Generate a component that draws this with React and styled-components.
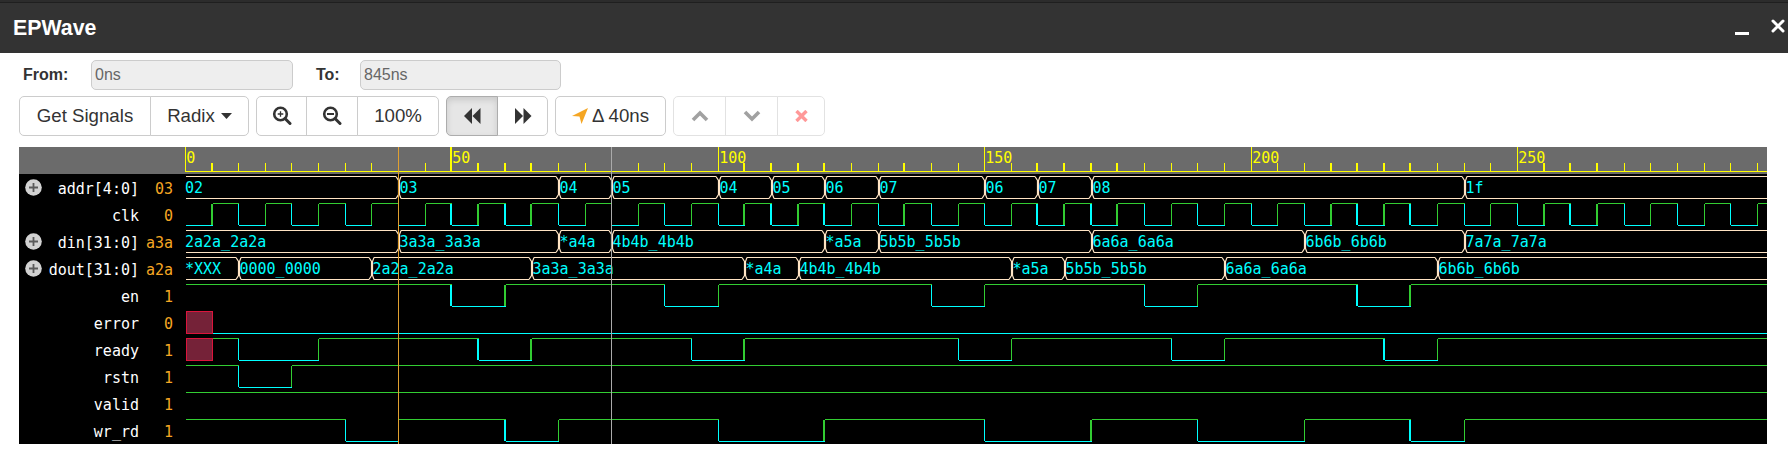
import React from "react";
import styled, { createGlobalStyle } from "styled-components";

const GlobalStyle = createGlobalStyle`
  html, body { margin: 0; padding: 0; background: #fff; overflow: hidden; }
  body { font-family: "Liberation Sans", Arial, sans-serif; color: #333; }
`;

const Page = styled.div`
  width: 1788px;
  height: 451px;
  display: flex;
  flex-direction: column;
`;
const TopStrip = styled.div`
  height: 2px;
  background: #2c2c2c;
  border-bottom: 1px solid #1f1f1f;
`;
const TitleBar = styled.header`
  height: 50px;
  background: #333;
  display: flex;
  align-items: center;
  padding-left: 13px;
`;
const Title = styled.h1`
  margin: 0;
  flex: 1;
  font-size: 21.33px;
  font-weight: 700;
  color: #fff;
`;
const WindowIcon = styled.svg`
  display: block;
  flex: none;
`;
const FormRow = styled.div`
  display: flex;
  align-items: center;
  height: 30px;
  margin-top: 7px;
  padding-left: 23px;
`;
const FieldLabel = styled.label`
  width: ${(p) => p.$w}px;
  margin-left: ${(p) => p.$ml || 0}px;
  font-size: 16px;
  font-weight: 700;
  color: #333;
`;
const TimeInput = styled.input`
  box-sizing: border-box;
  width: ${(p) => p.$w}px;
  height: 30px;
  padding: 0 3px;
  background: #eee;
  border: 1px solid #ccc;
  border-radius: 5px;
  font: 16px "Liberation Sans", Arial, sans-serif;
  color: #666;
  outline: none;
`;
const Toolbar = styled.div`
  display: flex;
  height: 40px;
  margin-top: 6px;
  padding-left: 19px;
  gap: 7px;
`;
const Group = styled.div`
  display: flex;
  opacity: ${(p) => (p.$disabled ? 0.55 : 1)};
`;
const Btn = styled.button`
  box-sizing: border-box;
  width: ${(p) => p.$w}px;
  height: 40px;
  margin: 0 0 0 -1px;
  padding: 0;
  display: flex;
  align-items: center;
  justify-content: center;
  gap: ${(p) => p.$gap || 0}px;
  font: 18.67px "Liberation Sans", Arial, sans-serif;
  color: #333;
  background: ${(p) => (p.$active ? "#e6e6e6" : "#fff")};
  border: 1px solid ${(p) => (p.$active ? "#adadad" : "#ccc")};
  box-shadow: ${(p) => (p.$active ? "inset 0 3px 6px rgba(0,0,0,.125)" : "none")};
  position: ${(p) => (p.$active ? "relative" : "static")};
  z-index: ${(p) => (p.$active ? 1 : 0)};
  &:first-child { margin-left: 0; border-radius: 5px 0 0 5px; }
  &:last-child { border-radius: 0 5px 5px 0; }
  &:only-child { border-radius: 5px; }
`;
const Icon = styled.svg`
  display: block;
  flex: none;
`;
const Viewer = styled.section`
  display: flex;
  width: 1748px;
  height: 297px;
  margin: 11px 0 0 19px;
  background: #000;
`;
const SignalColumn = styled.div`
  width: 166px;
  flex: none;
`;
const RulerCap = styled.div`
  height: 27px;
  background: #6b6b6b;
`;
const SignalRow = styled.div`
  display: flex;
  align-items: center;
  box-sizing: border-box;
  height: 27px;
  padding: 2px 12px 0 6px;
  font: 15px "DejaVu Sans Mono", monospace;
`;
const ExpandSlot = styled.svg`
  display: block;
  flex: none;
  width: 17px;
  height: 17px;
  margin-bottom: 2px;
`;
const SignalName = styled.span`
  flex: 1;
  text-align: right;
  color: #fff;
  white-space: nowrap;
`;
const SignalValue = styled.span`
  width: 34px;
  flex: none;
  text-align: right;
  color: #f5a623;
`;
const WaveSvg = styled.svg`
  display: block;
  flex: none;
  width: 1582px;
  height: 297px;
`;
const WaveText = styled.text`
  font: 15px "DejaVu Sans Mono", monospace;
  fill: ${(p) => p.$fill};
`;

/* -------- waveform data -------- */
const GREEN = "#32cd32";
const CYAN = "#00ffff";
const BISQUE = "#ffe4c4";
const YELLOW = "#ffff00";
const END = 1767;

const px = (t) => Math.floor(185.38 + 5.3285 * t);
const isThick = (t) =>
  t === 0 || t === 5 || t === 135 ||
  (t >= 50 && t <= 65) || (t >= 105 && t <= 120) ||
  (t >= 160 && t <= 175) || (t >= 215 && t <= 230) || (t >= 255 && t <= 265);

const clkEdges = [];
for (let t = 5; t <= 295; t += 5) clkEdges.push(t);

const bits = [
  { row: 1, y: 203, start: 0, edges: clkEdges },
  { row: 4, y: 284, start: 1, edges: [50, 60, 90, 100, 140, 150, 180, 190, 220, 230] },
  { row: 5, y: 311, start: 0, edges: [], from: 5 },
  { row: 6, y: 338, start: 1, edges: [10, 25, 55, 65, 95, 105, 145, 155, 185, 195, 225, 235], from: 5 },
  { row: 7, y: 365, start: 1, edges: [10, 20] },
  { row: 8, y: 392, start: 1, edges: [] },
  { row: 9, y: 419, start: 1, edges: [30, 40, 60, 70, 100, 120, 150, 170, 190, 210, 230, 240] },
];

const buses = [
  { y: 176, items: [[0, "02"], [40, "03"], [70, "04"], [80, "05"], [100, "04"], [110, "05"], [120, "06"], [130, "07"], [150, "06"], [160, "07"], [170, "08"], [240, "1f"]] },
  { y: 230, items: [[0, "2a2a_2a2a"], [40, "3a3a_3a3a"], [70, "*a4a"], [80, "4b4b_4b4b"], [120, "*a5a"], [130, "5b5b_5b5b"], [170, "6a6a_6a6a"], [210, "6b6b_6b6b"], [240, "7a7a_7a7a"]] },
  { y: 257, items: [[0, "*XXX"], [10, "0000_0000"], [35, "2a2a_2a2a"], [65, "3a3a_3a3a"], [105, "*a4a"], [115, "4b4b_4b4b"], [155, "*a5a"], [165, "5b5b_5b5b"], [195, "6a6a_6a6a"], [235, "6b6b_6b6b"]] },
];

const signals = [
  { name: "addr[4:0]", value: "03", expand: true },
  { name: "clk", value: "0" },
  { name: "din[31:0]", value: "a3a", expand: true },
  { name: "dout[31:0]", value: "a2a", expand: true },
  { name: "en", value: "1" },
  { name: "error", value: "0" },
  { name: "ready", value: "1" },
  { name: "rstn", value: "1" },
  { name: "valid", value: "1" },
  { name: "wr_rd", value: "1" },
];

const Ruler = () => {
  const marks = [];
  for (let t = 0; t <= 295; t += 5) {
    const x = px(t);
    const major = t % 50 === 0;
    const w = isThick(t) ? 2 : 1;
    marks.push(
      <rect key={t} x={x - w + 1} y={major ? 147 : 163} width={w} height={major ? 25 : 9} fill={YELLOW} />
    );
    if (major) {
      marks.push(
        <WaveText key={`l${t}`} x={t === 0 ? 186.3 : x + 1.3} y={163} $fill={YELLOW}>{t}</WaveText>
      );
    }
  }
  return (
    <g>
      <rect x={185} y={147} width={1582} height={27} fill="#6b6b6b" />
      <rect x={185} y={171} width={1582} height={1} fill={YELLOW} />
      {marks}
    </g>
  );
};

const BitWave = ({ y, start, edges, from = 0 }) => {
  const hi = y;
  const lo = y + 22;
  const parts = [];
  let level = start;
  let prev = from === 0 ? 186 : px(from) + 1;
  edges.forEach((t) => {
    const x = px(t);
    parts.push(<rect key={`h${t}`} x={prev} y={level ? hi : lo} width={x + 1 - prev} height={1} fill={level ? GREEN : CYAN} />);
    level = level ? 0 : 1;
    const w = isThick(t) ? 2 : 1;
    parts.push(<rect key={`v${t}`} x={x - w + 1} y={hi + 1} width={w} height={21} fill={level ? GREEN : CYAN} />);
    prev = x + 1;
  });
  parts.push(<rect key="tail" x={prev} y={level ? hi : lo} width={END - prev} height={1} fill={level ? GREEN : CYAN} />);
  return <g>{parts}</g>;
};

const BusWave = ({ y, items }) => {
  const top = y + 0.5;
  const bot = y + 22.5;
  const parts = [];
  items.forEach(([t, label], i) => {
    const x = t === 0 ? 186 : px(t);
    const next = i + 1 < items.length ? px(items[i + 1][0]) - 2 : END;
    const startX = t === 0 ? 186 : x + 3;
    parts.push(
      <path
        key={`l${t}`}
        d={`M${startX} ${top}H${next}M${startX} ${bot}H${next}`}
        stroke={BISQUE}
        fill="none"
        shapeRendering="crispEdges"
      />
    );
    if (t !== 0) {
      parts.push(
        <path
          key={`x${t}`}
          d={`M${x - 2} ${top}L${x + 0.5} ${top + 4}V${bot - 4}L${x - 2} ${bot}M${x + 3} ${top}L${x + 1.5} ${top + 4}V${bot - 4}L${x + 3} ${bot}`}
          stroke={BISQUE}
          strokeWidth="1.2"
          fill="none"
        />
      );
    }
    parts.push(
      <WaveText key={`t${t}`} x={t === 0 ? 185 : x + 1.5} y={y + 17} $fill={CYAN}>{label}</WaveText>
    );
  });
  return <g>{parts}</g>;
};

const XBlock = ({ y }) => (
  <rect x={186.5} y={y + 0.5} width={26} height={22} fill="#752238" stroke="#dc143c" strokeWidth="1.2" shapeRendering="crispEdges" />
);

const Expand = () => (
  <ExpandSlot viewBox="0 0 17 17">
    <circle cx="8.5" cy="8.5" r="8.3" fill="#d2d2d2" />
    <path d="M8.5 4v9M4 8.5h9" stroke="#5a5a5a" strokeWidth="1.8" />
  </ExpandSlot>
);

const SearchIcon = ({ plus }) => (
  <Icon width="20" height="20" viewBox="0 0 20 20">
    <circle cx="8.5" cy="8" r="6.3" fill="none" stroke="#333" strokeWidth="2.6" />
    <path d="M13 12.5l5 5" stroke="#333" strokeWidth="3" strokeLinecap="round" />
    <path d={plus ? "M5.7 8h5.6M8.5 5.2v5.6" : "M5 8h7"} stroke="#333" strokeWidth={plus ? 1.3 : 2} />
  </Icon>
);

const App = () => (
  <Page>
    <GlobalStyle />
    <TopStrip />
    <TitleBar>
      <Title>EPWave</Title>
      <WindowIcon width="53" height="30" viewBox="0 0 53 30">
        <rect x="0" y="19" width="14" height="3" fill="#fff" />
        <path d="M38 8l10 10M48 8L38 18" stroke="#fff" strokeWidth="3" strokeLinecap="round" />
      </WindowIcon>
    </TitleBar>
    <FormRow>
      <FieldLabel $w={68}>From:</FieldLabel>
      <TimeInput $w={202} readOnly value="0ns" />
      <FieldLabel $w={44} $ml={23}>To:</FieldLabel>
      <TimeInput $w={201} readOnly value="845ns" />
    </FormRow>
    <Toolbar>
      <Group>
        <Btn $w={132}>Get Signals</Btn>
        <Btn $w={99} $gap={6}>
          Radix
          <Icon width="11" height="6" viewBox="0 0 11 6"><path d="M0 0h11L5.5 6z" fill="#333" /></Icon>
        </Btn>
      </Group>
      <Group>
        <Btn $w={51}><SearchIcon plus /></Btn>
        <Btn $w={52}><SearchIcon /></Btn>
        <Btn $w={82}>100%</Btn>
      </Group>
      <Group>
        <Btn $w={52} $active>
          <Icon width="18" height="16" viewBox="0 0 18 16"><path d="M9 0v16L1 8zM17.500 0v16l-8-8z" fill="#333" /></Icon>
        </Btn>
        <Btn $w={51}>
          <Icon width="18" height="16" viewBox="0 0 18 16"><path d="M1 0v16l8-8zM9.500 0v16l8-8z" fill="#333" /></Icon>
        </Btn>
      </Group>
      <Group>
        <Btn $w={111} $gap={4}>
          <Icon width="16" height="16" viewBox="0 0 16 16"><path d="M16 0L9.500 16 7.500 8.500 0 8z" fill="#f5a623" /></Icon>
          Δ 40ns
        </Btn>
      </Group>
      <Group $disabled>
        <Btn $w={53}>
          <Icon width="18" height="12" viewBox="0 0 18 12"><path d="M2 10l7-7 7 7" fill="none" stroke="#555" strokeWidth="3.6" /></Icon>
        </Btn>
        <Btn $w={53}>
          <Icon width="18" height="12" viewBox="0 0 18 12"><path d="M2 2l7 7 7-7" fill="none" stroke="#555" strokeWidth="3.6" /></Icon>
        </Btn>
        <Btn $w={48}>
          <Icon width="13" height="12" viewBox="0 0 13 12"><path d="M1.500 1l10 10M11.500 1l-10 10" fill="none" stroke="#f44" strokeWidth="3.4" /></Icon>
        </Btn>
      </Group>
    </Toolbar>
    <Viewer>
      <SignalColumn>
        <RulerCap />
        {signals.map((s) => (
          <SignalRow key={s.name}>
            {s.expand && <Expand />}
            <SignalName>{s.name}</SignalName>
            <SignalValue>{s.value}</SignalValue>
          </SignalRow>
        ))}
      </SignalColumn>
      <WaveSvg viewBox="185 147 1582 297">
        <Ruler />
        {buses.map((b) => <BusWave key={b.y} {...b} />)}
        {bits.map((b) => <BitWave key={b.row} {...b} />)}
        <XBlock y={311} />
        <XBlock y={338} />
        <rect x={398} y={147} width={1} height={297} fill="#e0a030" />
        <rect x={611} y={147} width={1} height={297} fill="#aaaaaa" />
      </WaveSvg>
    </Viewer>
  </Page>
);

export default App;
